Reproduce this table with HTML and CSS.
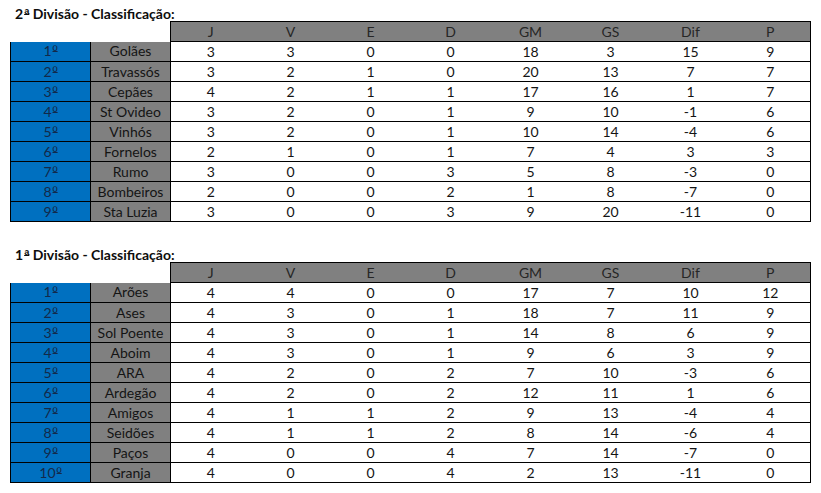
FILE: index.html
```html
<!DOCTYPE html>
<html>
<head>
<meta charset="utf-8">
<link rel="stylesheet" href="styles.css">
</head>
<body>
<div class="page">
  <div class="title">2<span class="ord">ª</span> Divisão - Classificação:</div>
  <table class="standings">
    <tr class="head"><td class="blank"></td><td class="blank"></td><th>J</th><th>V</th><th>E</th><th>D</th><th>GM</th><th>GS</th><th>Dif</th><th>P</th></tr>
    <tr><td class="pos">1<span class="ord">º</span></td><td class="team">Golães</td><td>3</td><td>3</td><td>0</td><td>0</td><td>18</td><td>3</td><td>15</td><td class="last">9</td></tr>
    <tr><td class="pos">2<span class="ord">º</span></td><td class="team">Travassós</td><td>3</td><td>2</td><td>1</td><td>0</td><td>20</td><td>13</td><td>7</td><td class="last">7</td></tr>
    <tr><td class="pos">3<span class="ord">º</span></td><td class="team">Cepães</td><td>4</td><td>2</td><td>1</td><td>1</td><td>17</td><td>16</td><td>1</td><td class="last">7</td></tr>
    <tr><td class="pos">4<span class="ord">º</span></td><td class="team">St Ovideo</td><td>3</td><td>2</td><td>0</td><td>1</td><td>9</td><td>10</td><td>-1</td><td class="last">6</td></tr>
    <tr><td class="pos">5<span class="ord">º</span></td><td class="team">Vinhós</td><td>3</td><td>2</td><td>0</td><td>1</td><td>10</td><td>14</td><td>-4</td><td class="last">6</td></tr>
    <tr><td class="pos">6<span class="ord">º</span></td><td class="team">Fornelos</td><td>2</td><td>1</td><td>0</td><td>1</td><td>7</td><td>4</td><td>3</td><td class="last">3</td></tr>
    <tr><td class="pos">7<span class="ord">º</span></td><td class="team">Rumo</td><td>3</td><td>0</td><td>0</td><td>3</td><td>5</td><td>8</td><td>-3</td><td class="last">0</td></tr>
    <tr><td class="pos">8<span class="ord">º</span></td><td class="team">Bombeiros</td><td>2</td><td>0</td><td>0</td><td>2</td><td>1</td><td>8</td><td>-7</td><td class="last">0</td></tr>
    <tr><td class="pos">9<span class="ord">º</span></td><td class="team">Sta Luzia</td><td>3</td><td>0</td><td>0</td><td>3</td><td>9</td><td>20</td><td>-11</td><td class="last">0</td></tr>
  </table>

  <div class="title second">1<span class="ord">ª</span> Divisão - Classificação:</div>
  <table class="standings">
    <tr class="head"><td class="blank"></td><td class="blank"></td><th>J</th><th>V</th><th>E</th><th>D</th><th>GM</th><th>GS</th><th>Dif</th><th>P</th></tr>
    <tr><td class="pos">1<span class="ord">º</span></td><td class="team">Arões</td><td>4</td><td>4</td><td>0</td><td>0</td><td>17</td><td>7</td><td>10</td><td class="last">12</td></tr>
    <tr><td class="pos">2<span class="ord">º</span></td><td class="team">Ases</td><td>4</td><td>3</td><td>0</td><td>1</td><td>18</td><td>7</td><td>11</td><td class="last">9</td></tr>
    <tr><td class="pos">3<span class="ord">º</span></td><td class="team">Sol Poente</td><td>4</td><td>3</td><td>0</td><td>1</td><td>14</td><td>8</td><td>6</td><td class="last">9</td></tr>
    <tr><td class="pos">4<span class="ord">º</span></td><td class="team">Aboim</td><td>4</td><td>3</td><td>0</td><td>1</td><td>9</td><td>6</td><td>3</td><td class="last">9</td></tr>
    <tr><td class="pos">5<span class="ord">º</span></td><td class="team">ARA</td><td>4</td><td>2</td><td>0</td><td>2</td><td>7</td><td>10</td><td>-3</td><td class="last">6</td></tr>
    <tr><td class="pos">6<span class="ord">º</span></td><td class="team">Ardegão</td><td>4</td><td>2</td><td>0</td><td>2</td><td>12</td><td>11</td><td>1</td><td class="last">6</td></tr>
    <tr><td class="pos">7<span class="ord">º</span></td><td class="team">Amigos</td><td>4</td><td>1</td><td>1</td><td>2</td><td>9</td><td>13</td><td>-4</td><td class="last">4</td></tr>
    <tr><td class="pos">8<span class="ord">º</span></td><td class="team">Seidões</td><td>4</td><td>1</td><td>1</td><td>2</td><td>8</td><td>14</td><td>-6</td><td class="last">4</td></tr>
    <tr><td class="pos">9<span class="ord">º</span></td><td class="team">Paços</td><td>4</td><td>0</td><td>0</td><td>4</td><td>7</td><td>14</td><td>-7</td><td class="last">0</td></tr>
    <tr><td class="pos">10<span class="ord">º</span></td><td class="team">Granja</td><td>4</td><td>0</td><td>0</td><td>4</td><td>2</td><td>13</td><td>-11</td><td class="last">0</td></tr>
  </table>
</div>
</body>
</html>
```

FILE: styles.css
```css
html, body {
  margin: 0;
  padding: 0;
  background: #ffffff;
}

.page {
  padding: 1px 0 0 10px;
  font-family: Lato, "Open Sans", "Liberation Sans", sans-serif;
  font-size: 14px;
  color: #141414;
}

.ord {
  font-family: "Liberation Sans", "DejaVu Sans", sans-serif;
  font-size: 14px;
  margin-left: 1px;
  text-decoration: underline;
  text-decoration-thickness: 1px;
  text-underline-offset: -5px;
  text-decoration-skip-ink: none;
}

.title {
  height: 20px;
  line-height: 26px;
  padding-left: 5px;
  font-weight: bold;
  font-size: 14px;
  color: #0d0d0d;
}

.title.second {
  margin-top: 20px;
}

.standings {
  border-collapse: collapse;
  table-layout: fixed;
  width: 801px;
}

.standings td,
.standings th {
  width: 80px;
  height: 20px;
  padding: 0;
  box-sizing: border-box;
  text-align: center;
  vertical-align: middle;
  line-height: 18px;
  font-weight: normal;
  border-bottom: 1px solid #000;
}

.standings th {
  background: #808080;
  color: #262626;
  border-top: 1px solid #000;
}

.standings .head th:first-of-type {
  border-left: 1px solid #000;
}

.standings .head th:last-child {
  border-right: 1px solid #000;
}

.standings td.blank {
  border: none;
  background: transparent;
}

.standings td.pos {
  background: #0070c0;
  color: #13294a;
  border-left: 1px solid #000;
  border-right: 1px solid #000;
}

.standings td.team {
  background: #808080;
  color: #141414;
  border-right: 1px solid #000;
}

.standings td.last {
  border-right: 1px solid #000;
}
```
